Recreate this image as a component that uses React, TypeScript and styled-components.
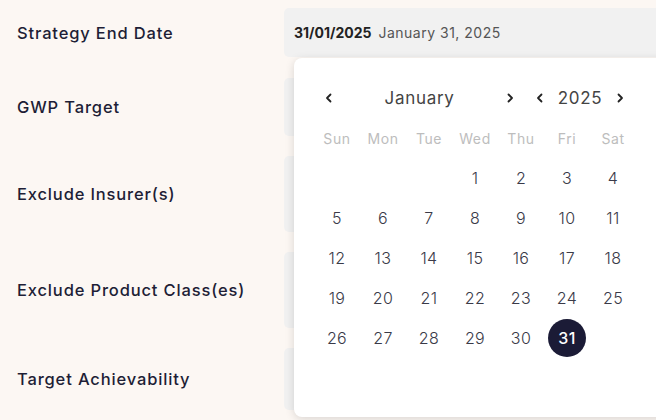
import React from "react";
import styled, { createGlobalStyle } from "styled-components";

const Global = createGlobalStyle`
  html, body {
    margin: 0;
    padding: 0;
    background: #fcf7f3;
    font-family: Inter, "Noto Sans", sans-serif;
    overflow: hidden;
  }
`;

const Page = styled.div`
  position: relative;
  width: 656px;
  height: 420px;
  overflow: hidden;
  padding-top: 8px;
  box-sizing: border-box;
`;

const Row = styled.div<{ $h: number; $gap: number }>`
  display: flex;
  align-items: center;
  height: ${(p) => p.$h}px;
  margin-bottom: ${(p) => p.$gap}px;
`;

const Label = styled.div`
  flex: 0 0 284px;
  padding-left: 17px;
  box-sizing: border-box;
  font-size: 16.5px;
  font-weight: 500;
  color: #1e1e36;
  letter-spacing: 0.85px;
`;

const Field = styled.div`
  flex: 0 0 420px;
  height: 100%;
  background: #f1f1f1;
  border-radius: 5px;
  display: flex;
  align-items: center;
  padding-left: 10px;
  gap: 7px;
  font-size: 14px;
`;

const DateBold = styled.span`
  font-weight: 700;
  color: #222;
`;

const DateLong = styled.span`
  color: #555;
  letter-spacing: 0.5px;
`;

const Popover = styled.div`
  position: absolute;
  left: 294px;
  top: 58px;
  width: 380px;
  height: 359px;
  background: #fff;
  border-radius: 8px;
  box-shadow: 0 2px 10px rgba(0, 0, 0, 0.14);
  padding: 25px 20px 0;
  box-sizing: border-box;
`;

const Header = styled.div`
  display: grid;
  grid-template-columns: 30px 151px 30px 30px 50px 30px;
  height: 30px;
  align-items: center;
  margin-bottom: 5px;
  width: 322px;
`;

const Nav = styled.button`
  border: 0;
  background: none;
  padding: 0;
  display: flex;
  align-items: center;
  justify-content: center;
  height: 30px;
  color: #222;
`;

const HeadText = styled.div`
  text-align: center;
  font-size: 17px;
  color: #444;
  letter-spacing: 0.7px;
`;

const Grid = styled.div`
  display: grid;
  grid-template-columns: repeat(7, 46px);
  grid-auto-rows: 40px;
  width: 322px;
`;

const DayName = styled.div`
  display: flex;
  align-items: center;
  justify-content: center;
  font-size: 14px;
  color: #bdbdbd;
  letter-spacing: 0.6px;
`;

const Day = styled.div<{ $sel?: boolean }>`
  display: flex;
  align-items: center;
  justify-content: center;
  font-size: 16px;
  font-weight: 300;
  letter-spacing: 0.4px;
  color: ${(p) => (p.$sel ? "#fff" : "#3a3a48")};
  span {
    width: 38px;
    height: 38px;
    border-radius: 50%;
    display: flex;
    align-items: center;
    justify-content: center;
    font-weight: ${(p) => (p.$sel ? 500 : 300)};
    background: ${(p) => (p.$sel ? "#1b1b36" : "transparent")};
  }
`;

const Chevron = ({ dir }: { dir: "l" | "r" }) => (
  <svg width="8" height="12" viewBox="0 0 8 12">
    <path
      d={dir === "l" ? "M5.5 2.5 L2 6 L5.5 9.5" : "M2.5 2.5 L6 6 L2.5 9.5"}
      fill="none"
      stroke="#222"
      strokeWidth="1.8"
      strokeLinecap="round"
      strokeLinejoin="round"
    />
  </svg>
);

const rows = [
  { label: "Strategy End Date", h: 49, gap: 21 },
  { label: "GWP Target", h: 58, gap: 20 },
  { label: "Exclude Insurer(s)", h: 76, gap: 20 },
  { label: "Exclude Product Class(es)", h: 76, gap: 20 },
  { label: "Target Achievability", h: 62, gap: 0 },
];

const names = ["Sun", "Mon", "Tue", "Wed", "Thu", "Fri", "Sat"];

export default function App() {
  const cells: (number | null)[] = [null, null, null];
  for (let d = 1; d <= 31; d++) cells.push(d);

  return (
    <Page>
      <Global />
      {rows.map((r, i) => (
        <Row key={r.label} $h={r.h} $gap={r.gap}>
          <Label>{r.label}</Label>
          <Field>
            {i === 0 && (
              <>
                <DateBold>31/01/2025</DateBold>
                <DateLong>January 31, 2025</DateLong>
              </>
            )}
          </Field>
        </Row>
      ))}
      <Popover>
        <Header>
          <Nav><Chevron dir="l" /></Nav>
          <HeadText>January</HeadText>
          <Nav><Chevron dir="r" /></Nav>
          <Nav><Chevron dir="l" /></Nav>
          <HeadText>2025</HeadText>
          <Nav><Chevron dir="r" /></Nav>
        </Header>
        <Grid>
          {names.map((n) => (
            <DayName key={n}>{n}</DayName>
          ))}
          {cells.map((d, i) => (
            <Day key={i} $sel={d === 31}>
              {d !== null && <span>{d}</span>}
            </Day>
          ))}
        </Grid>
      </Popover>
    </Page>
  );
}
